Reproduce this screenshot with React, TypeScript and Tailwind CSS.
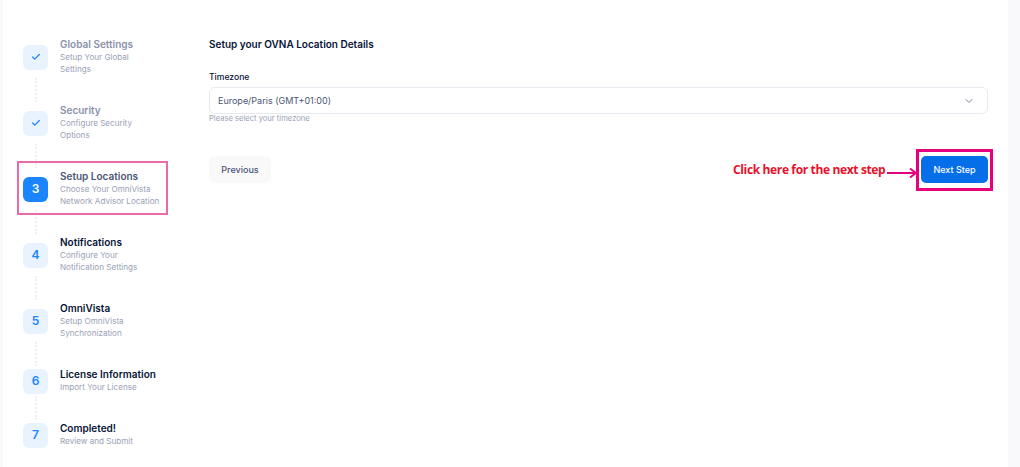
import { Check, ChevronDown } from 'lucide-react';

type Step = {
  id: number;
  title: string;
  lines: string[];
  state: 'done' | 'current' | 'todo';
};

const steps: Step[] = [
  { id: 1, title: 'Global Settings', lines: ['Setup Your Global', 'Settings'], state: 'done' },
  { id: 2, title: 'Security', lines: ['Configure Security', 'Options'], state: 'done' },
  { id: 3, title: 'Setup Locations', lines: ['Choose Your OmniVista', 'Network Advisor Location'], state: 'current' },
  { id: 4, title: 'Notifications', lines: ['Configure Your', 'Notification Settings'], state: 'todo' },
  { id: 5, title: 'OmniVista', lines: ['Setup OmniVista', 'Synchronization'], state: 'todo' },
  { id: 6, title: 'License Information', lines: ['Import Your License'], state: 'todo' },
  { id: 7, title: 'Completed!', lines: ['Review and Submit'], state: 'todo' },
];

function StepRow({ step, last }: { step: Step; last: boolean }) {
  const isCurrent = step.state === 'current';
  const isDone = step.state === 'done';

  return (
    <div>
      <div className="flex items-center gap-3">
        <div
          className={
            isCurrent
              ? 'flex w-[25px] h-[25px] shrink-0 items-center justify-center rounded-[6px] bg-[#1b84ff] text-[12px] font-semibold text-white'
              : 'flex w-[25px] h-[25px] shrink-0 items-center justify-center rounded-[6px] bg-[#e9f3ff] text-[12px] font-semibold text-[#1b84ff]'
          }
        >
          {isDone ? <Check size={10} strokeWidth={3} /> : step.id}
        </div>
        <div className="pb-[2px]">
          <div
            className={
              step.state === 'todo'
                ? 'text-[10px] leading-[14px] font-semibold text-[#071437]'
                : isCurrent
                  ? 'text-[10px] leading-[14px] font-semibold text-[#4b5675]'
                  : 'text-[10px] leading-[14px] font-semibold text-[#8a91ab]'
            }
          >
            {step.title}
          </div>
          {step.lines.map((line) => (
            <div key={line} className="text-[8.1px] leading-[12px] text-[#99a1b7]">
              {line}
            </div>
          ))}
        </div>
      </div>
      {!last && (
        <div className="ml-[12px] mt-[1px] mb-[1px] h-[24px] border-l-2 border-dotted border-[#eef0f6]" />
      )}
    </div>
  );
}

export default function App() {
  return (
    <div className="relative flex w-[1020px] h-[467px] overflow-hidden bg-white font-['Inter',sans-serif]">
      <div className="w-[3px] shrink-0 bg-[#f9f9fb]" />

      <aside className="w-[206px] shrink-0 pl-[20px] pt-[37px]">
        {steps.map((step, i) => (
          <StepRow key={step.id} step={step} last={i === steps.length - 1} />
        ))}
      </aside>

      <main className="w-[779px] shrink-0 pt-[37px]">
        <h2 className="text-[10px] leading-[14px] font-semibold text-[#071437]">
          Setup your OVNA Location Details
        </h2>

        <label className="mt-[20px] block text-[8.6px] leading-[12px] font-medium text-[#071437]">
          Timezone
        </label>
        <div className="mt-[4px] flex h-[27px] items-center justify-between rounded-[6px] border border-[#e8e8f0] pl-[8px] pr-[12px] text-[9px] text-[#4b5675]">
          <span>Europe/Paris (GMT+01:00)</span>
          <ChevronDown size={12} className="text-[#78829d]" />
        </div>
        <p className="text-[7.6px] leading-[10px] text-[#99a1b7]">
          Please select your timezone
        </p>

        <div className="mt-[32px] flex items-center justify-between">
          <button className="h-[27px] w-[62px] rounded-[6px] bg-[#f9f9f9] text-[9px] font-medium text-[#4b5675]">
            Previous
          </button>
          <button className="h-[27px] w-[67px] rounded-[5px] bg-[#056ee9] text-[9px] font-medium text-white">
            Next Step
          </button>
        </div>
      </main>

      <div className="ml-auto w-[12px] shrink-0 bg-[#f9f9fb]" />

      {/* annotations drawn on top of the page */}
      <div className="absolute left-[17px] top-[161px] h-[54px] w-[151px] border-2 border-[#ee6aa7]" />
      <div className="absolute left-[916px] top-[149px] h-[42px] w-[77px] border-[3px] border-[#e6007e]" />
      <span className="absolute left-[733px] top-[162px] font-['Open_Sans',sans-serif] text-[12px] leading-[16px] font-bold tracking-[-0.36px] text-[#e8102a]">
        Click here for the next step
      </span>
      <svg width="30" height="12" viewBox="0 0 30 12" className="absolute left-[887px] top-[167px]">
        <path d="M0 6H28M23 1.5l6 4.5-6 4.5" fill="none" stroke="#e6007e" strokeWidth="2" />
      </svg>
    </div>
  );
}
